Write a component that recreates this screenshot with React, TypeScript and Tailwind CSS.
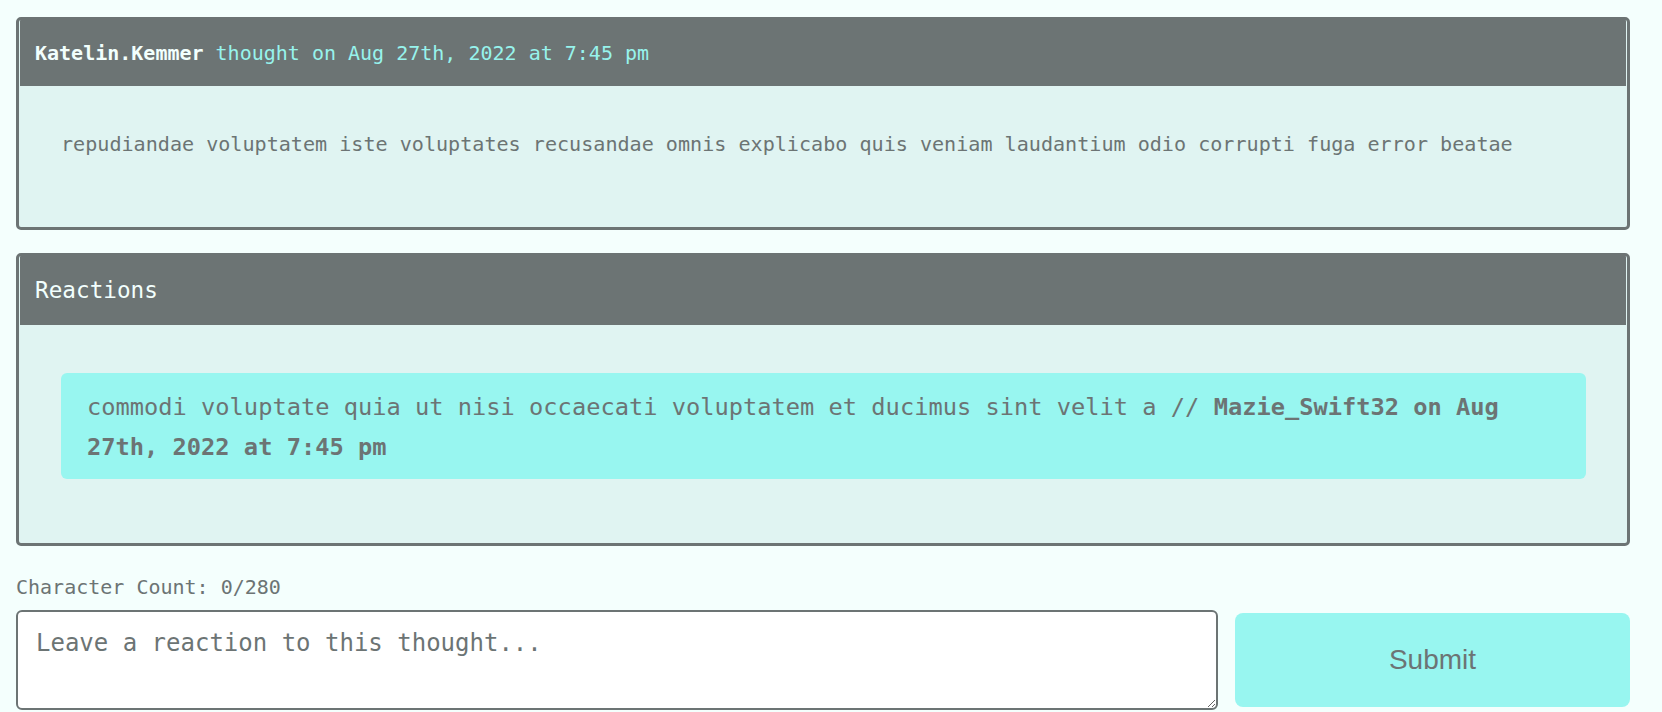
import React from "react";

const mono = { fontFamily: '"DejaVu Sans Mono", "Liberation Mono", monospace' };

export default function App() {
  return (
    <div
      className="min-h-[712px] w-full bg-[#f4fffd] pl-4 pt-[17px] text-[#6c7474]"
      style={mono}
    >
      <div className="w-[1614px]">
        {/* Thought card */}
        <div className="overflow-hidden rounded-[5px] border-[3px] border-[#6c7474] bg-[#e0f4f2]">
          <div className="mx-px flex h-[66px] items-center bg-[#6c7474] pl-[15px] text-[20px]">
            <span className="font-bold text-[#f2fffd]">Katelin.Kemmer</span>
            <span className="ml-[12px] text-[#97f3ec]">thought on Aug 27th, 2022 at 7:45 pm</span>
          </div>
          <div className="pb-[68px] pl-[42px] pt-[43px] text-[20.1px] leading-[30px]">
            repudiandae voluptatem iste voluptates recusandae omnis explicabo quis veniam laudantium odio corrupti fuga error beatae
          </div>
        </div>

        {/* Reactions card */}
        <div className="mt-[23px] overflow-hidden rounded-[5px] border-[3px] border-[#6c7474] bg-[#e0f4f2]">
          <div className="mx-px flex h-[69px] items-center bg-[#6c7474] pl-[15px] text-[22.7px] text-[#f2fffd]">
            Reactions
          </div>
          <div className="pb-[64px] pl-[42px] pr-[41px] pt-[48px]">
            <div className="rounded-[6px] bg-[#98f6f0] px-[26px] pb-[12px] pt-[14px] text-[23.7px] leading-[40px]">
              commodi voluptate quia ut nisi occaecati voluptatem et ducimus sint velit a //{" "}
              <span className="font-bold">Mazie_Swift32 on Aug 27th, 2022 at 7:45 pm</span>
            </div>
          </div>
        </div>

        {/* Form */}
        <div className="mt-[26px] text-[20px] leading-[30px]">Character Count: 0/280</div>
        <div className="mt-[8px] flex items-center gap-[17px]">
          <textarea
            className="h-[100px] w-[1202px] rounded-[6px] border-2 border-[#6c7474] bg-white px-[18px] py-[13px] text-[24px] leading-[36px] text-[#6c7474] outline-none placeholder:text-[#6c7474]"
            style={mono}
            placeholder="Leave a reaction to this thought..."
          />
          <button
            className="h-[94px] flex-1 rounded-[8px] bg-[#98f6f0] text-[28px] text-[#6c7474]"
            style={{ fontFamily: '"Liberation Sans", Arial, sans-serif' }}
          >
            Submit
          </button>
        </div>
      </div>
    </div>
  );
}
